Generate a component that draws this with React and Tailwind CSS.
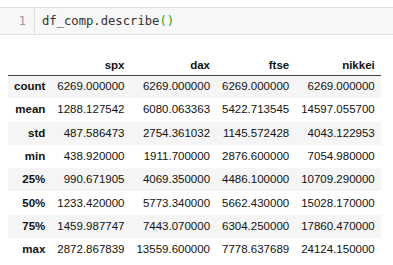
import React from "react";

const cols = ["spx", "dax", "ftse", "nikkei"];

const rows = [
  ["count", "6269.000000", "6269.000000", "6269.000000", "6269.000000"],
  ["mean", "1288.127542", "6080.063363", "5422.713545", "14597.055700"],
  ["std", "487.586473", "2754.361032", "1145.572428", "4043.122953"],
  ["min", "438.920000", "1911.700000", "2876.600000", "7054.980000"],
  ["25%", "990.671905", "4069.350000", "4486.100000", "10709.290000"],
  ["50%", "1233.420000", "5773.340000", "5662.430000", "15028.170000"],
  ["75%", "1459.987747", "7443.070000", "6304.250000", "17860.470000"],
  ["max", "2872.867839", "13559.600000", "7778.637689", "24124.150000"],
];

const App = () => {
  return (
    <div className="w-[393px] h-[265px] bg-white overflow-hidden">
      {/* input cell */}
      <div className="mt-[7px] flex h-[28px] bg-[#f7f7f7] border-y border-[#e0e0e0]">
        <div className="w-[34px] flex items-center justify-end pr-[8px] text-[12px] text-[#999] font-['DejaVu_Sans_Mono',monospace]">
          1
        </div>
        <div className="flex-1 flex items-center pl-[7px] border-l border-[#e0e0e0] text-[12.2px] text-[#333] font-['DejaVu_Sans_Mono',monospace]">
          df_comp.describe<span className="text-[#2a9d2a]">()</span>
        </div>
      </div>

      {/* output table */}
      <table className="ml-[8px] mt-[19px] border-collapse text-[11.5px] text-[#111] font-['Liberation_Sans',Arial,sans-serif]">
        <thead>
          <tr className="border-b border-[#444]">
            <th className="h-[21px] pt-[3px] px-[6px]"></th>
            {cols.map((c) => (
              <th key={c} className="h-[21px] pt-[3px] px-[6px] text-right font-bold">
                {c}
              </th>
            ))}
          </tr>
        </thead>
        <tbody>
          {rows.map((r, i) => (
            <tr key={r[0]} className={i % 2 === 0 ? "bg-[#f5f5f5]" : "bg-white"}>
              <th className="h-[23.3px] px-[6px] text-right font-bold">{r[0]}</th>
              {r.slice(1).map((v, j) => (
                <td key={j} className="h-[23.3px] px-[6px] text-right">
                  {v}
                </td>
              ))}
            </tr>
          ))}
        </tbody>
      </table>
    </div>
  );
};

export default App;
